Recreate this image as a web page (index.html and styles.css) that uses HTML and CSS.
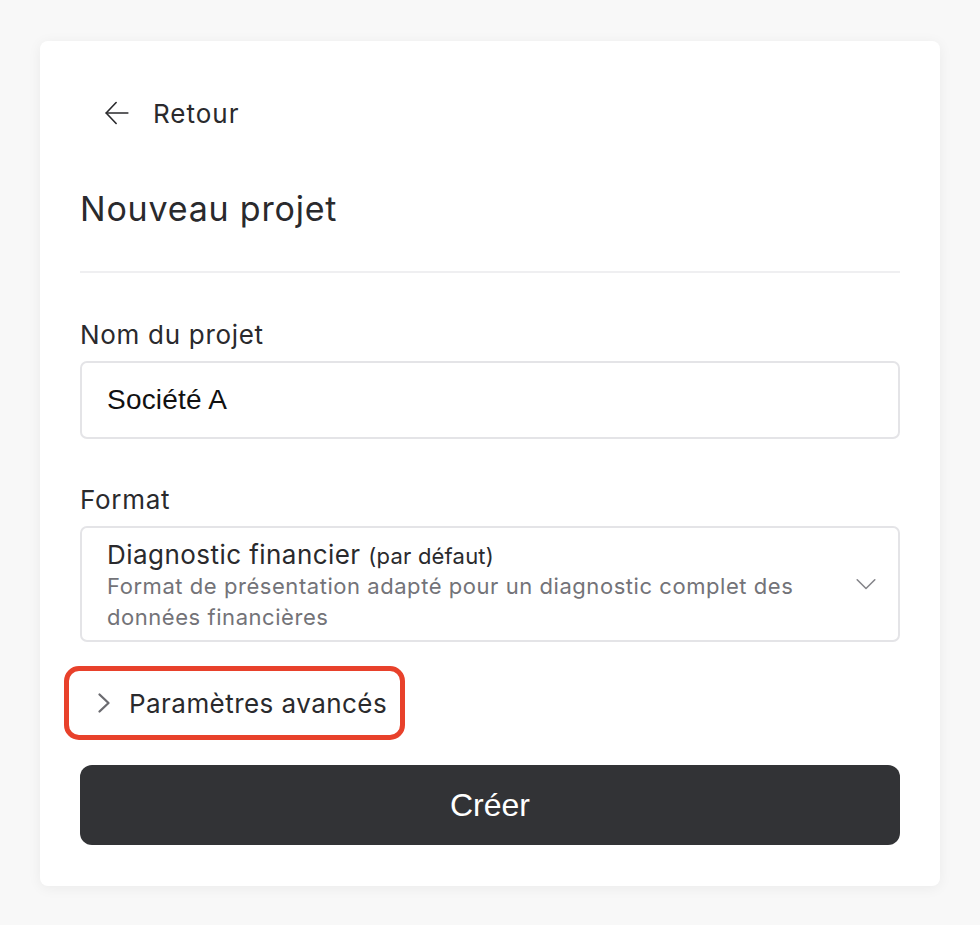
FILE: index.html
```html
<!DOCTYPE html>
<html lang="fr">
<head>
<meta charset="utf-8">
<title>Nouveau projet</title>
<link rel="stylesheet" href="styles.css">
</head>
<body>
<main class="card">
  <button class="back" type="button">
    <svg class="back-icon" viewBox="0 0 24 24" width="26" height="26" fill="none" stroke="currentColor" stroke-width="1.5" stroke-linecap="round" stroke-linejoin="round"><path d="M22 12H2"/><path d="M11.2 2.3 2 12l9.2 9.7"/></svg>
    <span>Retour</span>
  </button>
  <h1 class="title">Nouveau projet</h1>
  <hr class="divider">
  <div class="field">
    <label class="label" for="name">Nom du projet</label>
    <div class="input" id="name">Société A</div>
  </div>
  <div class="field">
    <span class="label">Format</span>
    <div class="select">
      <div class="select-text">
        <div class="select-title">Diagnostic financier <small>(par défaut)</small></div>
        <div class="select-desc">Format de présentation adapté pour un diagnostic complet des données financières</div>
      </div>
      <svg class="select-chevron" viewBox="0 0 20 14" width="20" height="14" fill="none" stroke="currentColor" stroke-width="1.6" stroke-linecap="round" stroke-linejoin="round"><path d="M1.2 2.8 10 11.5l8.8-8.7"/></svg>
    </div>
  </div>
  <button class="advanced" type="button">
    <svg class="advanced-icon" viewBox="0 0 24 24" width="24" height="24" fill="none" stroke="currentColor" stroke-width="2.3" stroke-linecap="round" stroke-linejoin="round"><path d="M7.5 3.5 16.5 12l-9 8.5"/></svg>
    <span>Paramètres avancés</span>
  </button>
  <button class="submit" type="button">Créer</button>
</main>
</body>
</html>
```

FILE: styles.css
```css
html, body {
  margin: 0;
  padding: 0;
}
body {
  background: #f8f8f8;
  font-family: Inter, "Noto Sans", sans-serif;
  color: #2a2a2d;
  padding: 41px 40px 39px;
}
.card {
  box-sizing: border-box;
  width: 900px;
  height: 845px;
  background: #fff;
  border-radius: 8px;
  box-shadow: 0 2px 14px rgba(0, 0, 0, 0.06);
  padding: 40px 40px;
  display: flex;
  flex-direction: column;
}
button {
  font-family: inherit;
  background: none;
  border: 0;
  padding: 0;
  cursor: pointer;
  color: inherit;
}
.back {
  align-self: flex-start;
  display: flex;
  align-items: center;
  gap: 23px;
  height: 64px;
  padding-left: 24px;
  font-size: 26px;
  letter-spacing: 1px;
  color: #2a2a2d;
}
.back-icon {
  width: 26px;
  height: 26px;
}
.title {
  margin: 44px 0 0;
  font-size: 34px;
  line-height: 40px;
  font-weight: 400;
  letter-spacing: 0.8px;
}
.divider {
  margin: 42px 0 0;
  border: 0;
  height: 2px;
  background: #efeff1;
}
.field {
  display: flex;
  flex-direction: column;
  gap: 10px;
  margin-top: 46px;
}
.field + .field {
  margin-top: 45px;
}
.label {
  font-size: 26px;
  line-height: 32px;
  letter-spacing: 0.7px;
}
.input {
  box-sizing: border-box;
  height: 78px;
  border: 2px solid #e4e4e7;
  border-radius: 7px;
  padding: 0 25px;
  display: flex;
  align-items: center;
  font-family: "Liberation Sans", Arial, sans-serif;
  font-size: 28px;
  letter-spacing: 0.2px;
  color: #111;
}
.select {
  box-sizing: border-box;
  height: 116px;
  border: 2px solid #e4e4e7;
  border-radius: 7px;
  padding: 0 22px 0 25px;
  display: flex;
  align-items: center;
  gap: 24px;
}
.select-text {
  flex: 1;
  padding-top: 4px;
}
.select-title {
  font-size: 26px;
  line-height: 30px;
  letter-spacing: 0.45px;
  color: #2a2a2d;
}
.select-title small {
  font-size: 22px;
  letter-spacing: 0.2px;
}
.select-desc {
  font-size: 22px;
  line-height: 31px;
  letter-spacing: 0.55px;
  color: #737378;
}
.select-chevron {
  color: #85858a;
  flex: none;
}
.advanced {
  position: relative;
  align-self: flex-start;
  margin-top: 29px;
  height: 64px;
  display: flex;
  align-items: center;
  gap: 13px;
  padding: 0 10px 0 12px;
  font-size: 26px;
  letter-spacing: 0.45px;
  color: #2a2a2d;
}
.advanced-icon {
  color: #6b6b70;
}
.advanced::after {
  content: "";
  position: absolute;
  top: -5px;
  bottom: -5px;
  left: -16px;
  right: -8px;
  border: 5px solid #e8412b;
  border-radius: 15px;
}
.submit {
  margin-top: 30px;
  height: 80px;
  border-radius: 12px;
  background: #323336;
  color: #fff;
  font-family: "Liberation Sans", Arial, sans-serif;
  font-size: 32px;
}
```
